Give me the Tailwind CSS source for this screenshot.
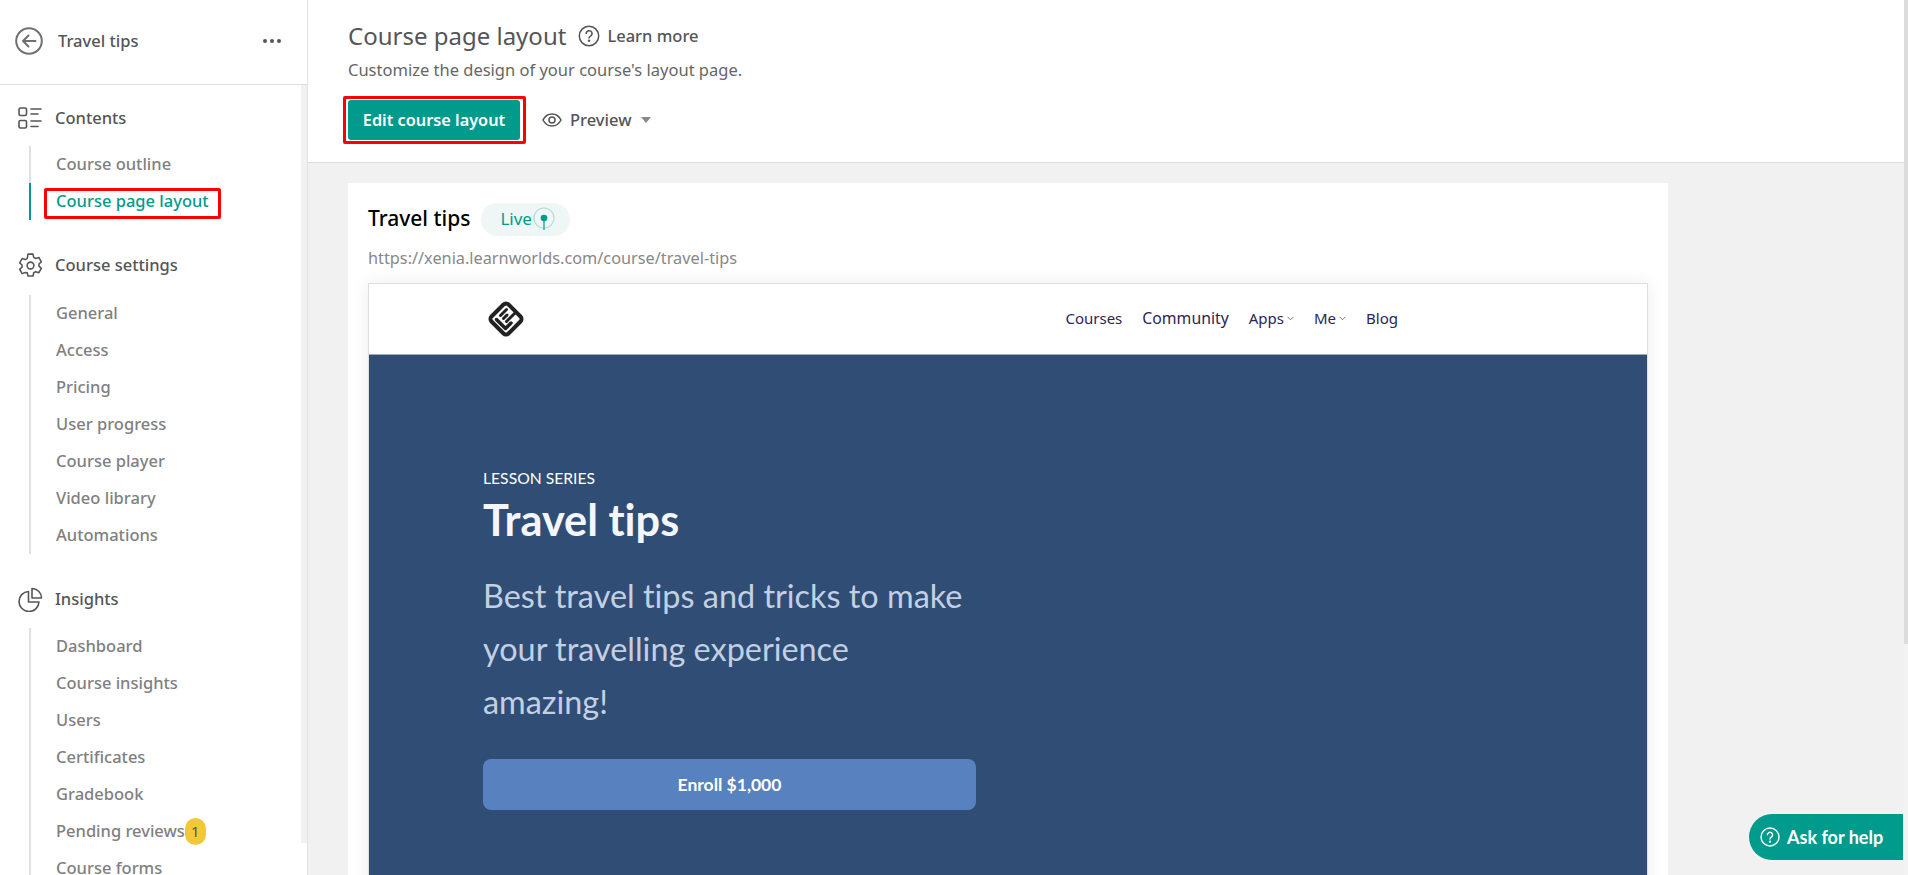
<!DOCTYPE html>
<html lang="en">
<head>
<meta charset="utf-8">
<title>Course page layout</title>
<script src="https://cdn.jsdelivr.net/npm/@tailwindcss/browser@4"></script>
</head>
<body class="m-0 bg-[#f1f1f1] font-['Noto_Sans',sans-serif]">
<div class="relative flex h-[875px] w-[1908px] overflow-hidden">
  <!-- Sidebar -->
  <aside class="flex h-full w-[308px] shrink-0 flex-col border-r border-[#e2e2e2] bg-white">
    <header class="flex h-[85px] shrink-0 items-center border-b border-[#dedede] pb-[2px] pl-[15px] pr-[26px]">
      <svg class="h-[28px] w-[28px] text-[#707070]" viewBox="0 0 28 28" fill="none" stroke="currentColor" stroke-width="2" stroke-linecap="round" stroke-linejoin="round"><circle cx="14" cy="14" r="12.800"/><path d="M20.500 14H8.500M13.500 8.500 8 14l5.500 5.500"/></svg>
      <span class="ml-[15px] text-[16.5px] font-medium text-[#555]">Travel tips</span>
      <span class="ml-auto flex gap-[3px]">
        <i class="block h-[4px] w-[4px] rounded-full bg-[#555]"></i><i class="block h-[4px] w-[4px] rounded-full bg-[#555]"></i><i class="block h-[4px] w-[4px] rounded-full bg-[#555]"></i>
      </span>
    </header>
    <div class="flex min-h-0 flex-1">
      <nav class="min-w-0 flex-1 overflow-hidden pl-[18px] text-[16.5px] font-medium">
        <div class="mt-[17px] flex h-[32px] items-center gap-[12px] text-[#555]">
          <svg class="h-[25px] w-[25px]" viewBox="0 0 25 25" fill="none" stroke="#555" stroke-width="1.6" stroke-linecap="round"><rect x="1" y="2" width="7.5" height="7.5" rx="1.5"/><rect x="1" y="14.5" width="7.5" height="7.5" rx="1.5"/><path d="M13 3h10M13 8h7M13 15h10M13 20.500h7"/></svg>
          <span>Contents</span>
        </div>
        <ul class="ml-[11px] mt-[12px] border-l-2 border-[#e0e0e0] pl-[25px] text-[#808080]">
          <li class="flex h-[37px] items-center">Course outline</li>
          <li class="relative -ml-[27px] flex h-[37px] items-center border-l-2 border-[#009b8d] pl-[25px] text-[#009b8d]">Course page layout
            <span class="absolute left-[13px] top-[5px] h-[31px] w-[177px] rounded-[2px] border-[3px] border-[#f00]"></span>
          </li>
        </ul>
        <div class="mt-[29px] flex h-[32px] items-center gap-[12px] text-[#555]">
          <svg class="h-[25px] w-[25px]" viewBox="0 0 24 24" fill="none" stroke="#555" stroke-width="1.5" stroke-linecap="round" stroke-linejoin="round"><circle cx="12" cy="12" r="3.250"/><path d="M9.600 1.500h4.800l.7 3.100 1.900 1.100 3-1 2.400 4.200-2.300 2.100v2l2.300 2.100-2.400 4.200-3-1-1.900 1.100-.7 3.100H9.600l-.7-3.100L7 19.200l-3 1-2.400-4.200L3.900 13.900v-2L1.600 9.900 4 5.700l3 1 1.900-1.100z" transform="translate(0 -.4)"/></svg>
          <span>Course settings</span>
        </div>
        <ul class="ml-[11px] mt-[14px] border-l-2 border-[#e0e0e0] pl-[25px] text-[#808080]">
          <li class="flex h-[37px] items-center">General</li>
          <li class="flex h-[37px] items-center">Access</li>
          <li class="flex h-[37px] items-center">Pricing</li>
          <li class="flex h-[37px] items-center">User progress</li>
          <li class="flex h-[37px] items-center">Course player</li>
          <li class="flex h-[37px] items-center">Video library</li>
          <li class="flex h-[37px] items-center">Automations</li>
        </ul>
        <div class="mt-[29px] flex h-[32px] items-center gap-[12px] text-[#555]">
          <svg class="h-[25px] w-[25px]" viewBox="0 0 25 25" fill="none" stroke="#555" stroke-width="1.600" stroke-linejoin="round"><path d="M10.500 4.500a10 10 0 1 0 10.500 10.500H10.500z"/><path d="M14 1.500a9.500 9.500 0 0 1 9.500 9.500H14z"/></svg>
          <span>Insights</span>
        </div>
        <ul class="ml-[11px] mt-[13px] border-l-2 border-[#e0e0e0] pl-[25px] text-[#808080]">
          <li class="flex h-[37px] items-center">Dashboard</li>
          <li class="flex h-[37px] items-center">Course insights</li>
          <li class="flex h-[37px] items-center">Users</li>
          <li class="flex h-[37px] items-center">Certificates</li>
          <li class="flex h-[37px] items-center">Gradebook</li>
          <li class="flex h-[37px] items-center">Pending reviews<span class="flex h-[27px] w-[21px] items-center justify-center rounded-full bg-[#f2c838] text-[15px] font-normal text-[#555]">1</span></li>
          <li class="flex h-[37px] items-center">Course forms</li>
        </ul>
      </nav>
      <div class="h-[758px] w-[6px] shrink-0 bg-[#f1f1f1]"></div>
    </div>
  </aside>

  <!-- Main -->
  <main class="flex min-w-0 flex-1 flex-col">
    <section class="h-[163px] shrink-0 border-b border-[#dedede] bg-white pl-[40px] pt-[19px]">
      <div class="flex h-[34px] items-center text-[#555]">
        <h1 class="text-[24px] font-normal leading-none">Course page layout</h1>
        <svg class="ml-[12px] h-[22px] w-[22px]" viewBox="0 0 22 22" fill="none" stroke="#555" stroke-width="1.500" stroke-linecap="round"><circle cx="11" cy="11" r="9.700"/><path d="M8.200 8.600a2.900 2.900 0 1 1 4.300 2.500c-.9.500-1.500 1-1.500 2"/><circle cx="11" cy="15.800" r=".5" fill="#555"/></svg>
        <span class="ml-[7px] text-[16.5px] font-medium">Learn more</span>
      </div>
      <p class="mt-[5px] text-[16.5px] leading-[24px] text-[#666]">Customize the design of your course's layout page.</p>
      <div class="mt-[18px] flex items-center">
        <div class="relative">
          <button class="flex h-[40px] w-[172px] items-center justify-center rounded-[3px] bg-[#009b8d] text-[16.3px] font-semibold text-white">Edit course layout</button>
          <span class="absolute -inset-y-[4px] -left-[5px] -right-[6px] rounded-[2px] border-[3px] border-[#f00]"></span>
        </div>
        <svg class="ml-[22px] h-[20px] w-[20px]" viewBox="0 0 20 20" fill="none" stroke="#555" stroke-width="1.500"><path d="M1 10c2-4 5.200-6 9-6s7 2 9 6c-2 4-5.200 6-9 6s-7-2-9-6z"/><circle cx="10" cy="10" r="3"/></svg>
        <span class="ml-[8px] text-[16.5px] font-medium text-[#555]">Preview</span>
        <span class="ml-[10px] h-0 w-0 border-x-[5px] border-t-[6px] border-x-transparent border-t-[#888]"></span>
      </div>
    </section>

    <section class="min-h-0 flex-1 pl-[40px] pt-[20px]">
      <div class="h-[800px] w-[1320px] bg-white px-[20px] pt-[19px]">
        <div class="flex h-[34px] items-center">
          <h2 class="text-[21px] font-medium text-black">Travel tips</h2>
          <span class="ml-[11px] flex h-[33px] w-[89px] items-center rounded-full bg-[#eef7f5] pl-[19px] text-[17px] text-[#009b8d]">Live
            <svg class="ml-[1px] h-[24px] w-[22px]" viewBox="0 0 22 24" fill="none"><circle cx="11" cy="11" r="10" stroke="#b5dcd7" stroke-width="1.200"/><circle cx="11" cy="11" r="3.300" fill="#009b8d"/><path d="M11 12v11" stroke="#009b8d" stroke-width="1.200"/></svg>
          </span>
        </div>
        <p class="mt-[10px] text-[16.300px] leading-[24px] text-[#888]">https://xenia.learnworlds.com/course/travel-tips</p>
        <div class="mt-[13px] border-x border-t border-[#dedede] shadow-[0_0_16px_rgba(0,0,0,0.08)]">
          <div class="flex h-[71px] items-center border-b border-[#aaa] bg-white pl-[117px] pr-[249px]">
            <svg class="h-[40px] w-[40px]" viewBox="0 0 40 40" fill="none" stroke="#222" stroke-linecap="round" stroke-linejoin="round"><rect x="8" y="8" width="24" height="24" rx="3.500" stroke-width="4" transform="rotate(45 20 20)"/><path d="M10.500 20.500 19.500 29.500l5.500-5.500" stroke-width="3.500"/><path d="M14.500 16.500 20.500 10.500M20.500 22.500 29 14M17.500 19.500l3.500-3.500" stroke-width="3"/></svg>
            <div class="ml-auto flex items-baseline gap-[20px] text-[15px] text-[#2c2455]">
              <span>Courses</span>
              <span class="text-[15.800px]">Community</span>
              <span class="flex items-center gap-[3px]">Apps<svg class="h-[5px] w-[7px]" viewBox="0 0 7 5" fill="none" stroke="#777"><path d="M.5.800 3.500 3.800 6.500.800"/></svg></span>
              <span class="flex items-center gap-[3px]">Me<svg class="h-[5px] w-[7px]" viewBox="0 0 7 5" fill="none" stroke="#777"><path d="M.5.800 3.500 3.800 6.500.800"/></svg></span>
              <span>Blog</span>
            </div>
          </div>
          <div class="h-[600px] bg-[#304d75] pl-[114px] pt-[112px] font-['Lato',sans-serif] [font-variant-ligatures:none]">
            <p class="text-[15.700px] leading-[22px] text-white">LESSON SERIES</p>
            <h3 class="text-[43.300px] font-bold leading-[60px] text-[#f3f7fd]">Travel tips</h3>
            <p class="mt-[21px] w-[493px] text-[32.400px] leading-[52.800px] text-[#c3d0e3]">Best travel tips and tricks to make your travelling experience amazing!</p>
            <button class="mt-[31px] flex h-[51px] w-[493px] items-center justify-center rounded-[8px] bg-[#5781bf] text-[17.500px] font-bold text-white">Enroll $1,000</button>
          </div>
        </div>
      </div>
    </section>
  </main>

  <!-- Main scrollbar -->
  <div class="absolute right-0 top-0 flex h-full w-[4px] flex-col bg-[#f3f3f3]">
    <div class="h-[644px] w-full bg-[#dcdcdc]"></div>
  </div>

  <!-- Floating help -->
  <button class="absolute bottom-[15px] right-[5px] flex h-[46px] w-[154px] items-center gap-[7px] rounded-l-full rounded-tr-[6px] rounded-br-[24px] bg-[#009b8d] pl-[11px] font-['Lato',sans-serif] text-[18px] font-bold text-white">
    <svg class="h-[20px] w-[20px]" viewBox="0 0 20 20" fill="none" stroke="#fff" stroke-width="1.400" stroke-linecap="round"><circle cx="10" cy="10" r="9"/><path d="M7.400 7.800a2.600 2.600 0 1 1 3.900 2.300c-.9.500-1.300.9-1.300 1.900"/><circle cx="10" cy="14.700" r=".4" fill="#fff"/></svg>
    Ask for help
  </button>
</div>
</body>
</html>
